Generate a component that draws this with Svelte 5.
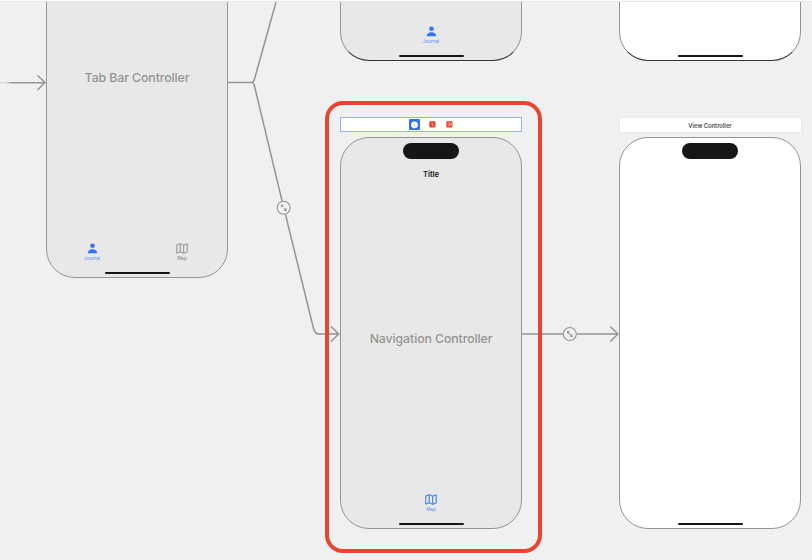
<script>
  const scenes = [
    { id: 'tab', x: 46, y: -114, h: 392, gray: true, label: 'Tab Bar Controller', labelTop: 183, tabs: ['person', 'map'], names: ['Journal', 'Map'], active: 0 },
    { id: 'journal', x: 340, y: -331, h: 392, gray: true, cut: true, tabs: ['person'], names: ['Journal'], active: 0 },
    { id: 'top-view', x: 619, y: -331, h: 392, gray: false, cut: true, tabs: [], names: [], active: -1 },
    { id: 'nav', x: 340, y: 137, h: 392, gray: true, title: 'Title', label: 'Navigation Controller', labelTop: 193, tabs: ['map'], names: ['Map'], active: 0 },
    { id: 'view', x: 619, y: 137, h: 392, gray: false, tabs: [], names: [], active: -1 }
  ];
</script>

<main class="canvas">
  {#each scenes as s (s.id)}
    <section class="phone" class:gray={s.gray} class:cut={s.cut} style="left:{s.x}px;top:{s.y}px;height:{s.h}px">
      <div class="island"></div>
      {#if s.title}<div class="title">{s.title}</div>{/if}
      {#if s.label}<div class="label" style="top:{s.labelTop}px">{s.label}</div>{/if}
      <div class="bottom">
        <div class="tabs">
          {#each s.tabs as t, i}
            <div class="tab" class:active={i === s.active}>
              {#if t === 'person'}
                <svg width="11" height="11" viewBox="0 0 11 11"><circle cx="5.5" cy="2.7" r="2.3" fill="currentColor" /><path d="M.8 10.3C.8 7.5 2.8 6.2 5.5 6.2s4.7 1.3 4.7 4.1Z" fill="currentColor" /></svg>
              {:else}
                <svg width="12" height="11" viewBox="0 0 12 11" fill="none" stroke="currentColor" stroke-width="1" stroke-linejoin="round"><path d="M.8 1.8 4.2.7l3.5 1.5L11.2.9v8.2l-3.5 1.2L4.2 8.9.8 10.2ZM4.2.7v8.2M7.7 2.2v8.1" /></svg>
              {/if}
              <span>{s.names[i]}</span>
            </div>
          {/each}
        </div>
        <div class="home"></div>
      </div>
    </section>
  {/each}

  <div class="bar selected">
    <svg width="11" height="11" viewBox="0 0 11 11"><rect width="11" height="11" rx="1.2" fill="#2f70f6" /><circle cx="5.5" cy="5.8" r="3.4" fill="#fff" /><path d="M6.3 4.4 4.9 5.8l1.4 1.4" fill="none" stroke="#8eb2fa" stroke-width=".8" /></svg>
    <svg width="7" height="7" viewBox="0 0 7 7"><rect x=".3" y=".3" width="6.2" height="6.2" rx=".7" fill="#e8432d" /><path d="m2.5 1.8 1.6 1.3-1.3.8 1.7 1.2" fill="none" stroke="#f7c0b8" stroke-width=".8" /></svg>
    <svg width="7" height="7" viewBox="0 0 7 7"><rect x=".3" y=".3" width="6.2" height="6.2" rx=".7" fill="#e8432d" /><path d="M1.6 2h2v2.6h-2M4.1 3.4h2M5.1 2.2l1 1.2-1 1.2" fill="none" stroke="#f7c0b8" stroke-width=".8" /></svg>
  </div>
  <div class="bar plain">View Controller</div>

  <svg class="wires" width="812" height="560" viewBox="0 0 812 560" fill="none" stroke="#949494" stroke-width="1.5">
    <defs><linearGradient id="entry" gradientUnits="userSpaceOnUse" x1="0" y1="0" x2="20" y2="0"><stop stop-color="#dedede" /><stop offset=".3" stop-color="#ddd" /><stop offset=".6" stop-color="#949494" /></linearGradient></defs>
    <rect x="0" y="82" width="45" height="1.5" fill="url(#entry)" stroke="none" />
    <path d="m37.5 75.5 7.5 7-7.5 7.5M228 82.5h23.5q2 0 2.6-2L276 2M251.5 82.5q2 0 2.6 2l28 116.7M285.4 214.3l28 113.7q1.5 6 5 6h20.5M331 326.5l7.7 7.5-7.7 7.5M522 334h41M577 334h41M610.3 326.5l7.6 7.5-7.6 7.5" />
    <g stroke-width="1.1">
      <circle cx="283.7" cy="207.8" r="6.5" fill="#f0f0f0" />
      <circle cx="569.8" cy="334" r="6.5" fill="#f0f0f0" />
      <path d="m281.5 205.5 1.6 1.4M284.3 208l1.8 2.2M281.5 207v-1.8h1.8M286 208.4v2h-1.8M567.6 331.8l4.2 4.4M567.6 333.2v-1.6h1.6M571.9 334.6v1.8h-1.7" />
    </g>
  </svg>

  <div class="highlight"></div>
  <div class="edge"></div>
</main>

<style>
  :global(body) { margin: 0; }
  .canvas {
    position: relative; width: 812px; height: 560px; overflow: hidden;
    background: #f0f0f0; font-family: Inter, "Liberation Sans", sans-serif;
  }
  .phone {
    position: absolute; box-sizing: border-box; width: 182px;
    border: 1px solid #949494; border-radius: 29px; background: #fff;
    display: flex; flex-direction: column; align-items: center;
  }
  .phone.gray { background: #e8e8e8; }
  .phone.cut { border-bottom-color: #333; }
  .island { width: 56px; height: 16px; margin-top: 5px; border-radius: 8px; background: #161616; flex: none; }
  .title { margin-top: 11px; font-size: 7.6px; line-height: 10px; font-weight: 600; color: #111; }
  .label {
    position: absolute; left: 0; right: 0; text-align: center; white-space: nowrap;
    font-size: 12.3px; line-height: 15px; font-weight: 500; letter-spacing: -.08px; color: #949494;
  }
  .bottom { margin-top: auto; width: 100%; display: flex; flex-direction: column; align-items: center; padding-bottom: 3px; }
  .tabs { display: flex; width: 100%; margin-bottom: 10px; }
  .tab { flex: 1; display: flex; flex-direction: column; align-items: center; color: #8f8f8f; }
  .tab svg { display: block; }
  .tab span { margin-top: 2px; font-size: 4.6px; line-height: 6px; font-weight: 500; }
  .tab.active { color: #2f74fa; }
  .tab.active span { color: #6b9cf8; }
  .home { width: 65px; height: 2px; border-radius: 1px; background: #161616; }
  .bar {
    position: absolute; box-sizing: border-box; width: 182px; height: 15px; top: 117px;
    display: flex; align-items: center; justify-content: center; background: #fff;
  }
  .bar.selected { left: 340px; border: 1px solid #8fb3f9; gap: 9.5px; padding-right: 1px; }
  .bar.plain {
    left: 619.5px; width: 181px; top: 118px; height: 14px; box-shadow: 0 0 0 1px #e8e8e8;
    font-size: 5.8px; font-weight: 600; color: #4b4b4b;
  }
  .wires { position: absolute; left: 0; top: 0; }
  .highlight {
    position: absolute; box-sizing: border-box; left: 325px; top: 101px;
    width: 217px; height: 452px; border: 4px solid #e9442e; border-radius: 18px;
  }
  .edge { position: absolute; left: 0; top: 0; width: 100%; height: 1px; background: #fff; border-bottom: 1px solid #e5e5e5; }
</style>
